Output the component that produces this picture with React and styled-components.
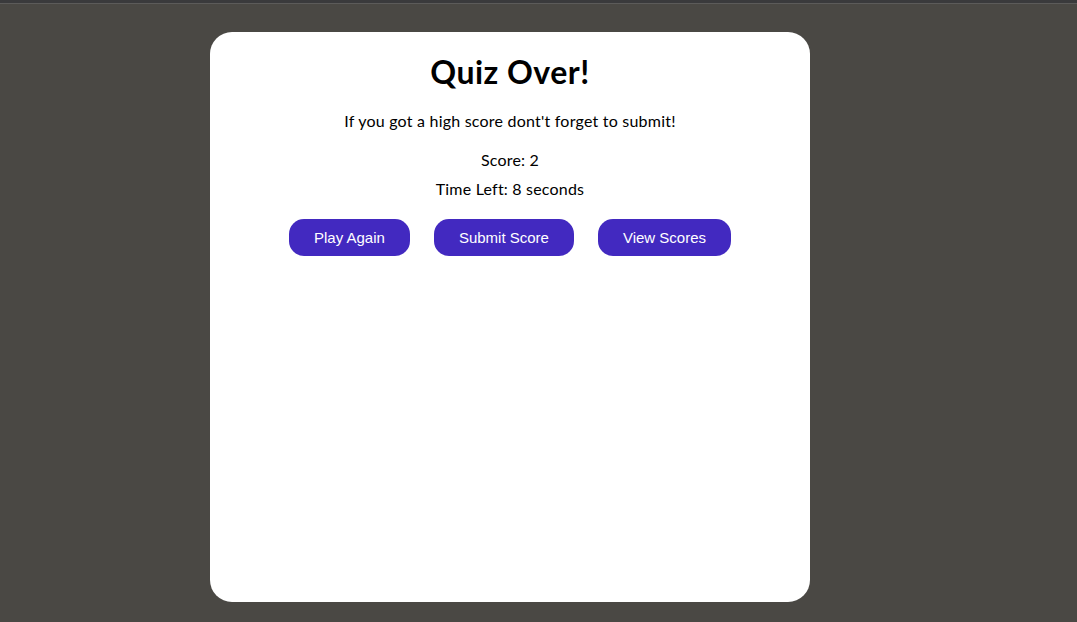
import styled, { createGlobalStyle } from "styled-components";

const GlobalStyle = createGlobalStyle`
  html, body {
    margin: 0;
    padding: 0;
    background: #4a4844;
    height: 100%;
  }
  #root {
    min-height: 100vh;
  }
`;

const Page = styled.div`
  min-height: 622px;
  display: flex;
  flex-direction: column;
  background: #4a4844;
`;

const TopBar = styled.div`
  height: 3px;
  background: #3a3a3c;
  border-bottom: 1px solid #5c5b5a;
`;

const Stage = styled.main`
  display: flex;
  justify-content: center;
  padding: 28px 0 20px 0;
`;

const Card = styled.section`
  width: 600px;
  height: 570px;
  box-sizing: border-box;
  margin-right: 57px;
  background: #ffffff;
  border-radius: 22px;
  display: flex;
  flex-direction: column;
  align-items: center;
  padding-top: 20px;
  font-family: "Lato", "Open Sans", sans-serif;
  color: #000;
`;

const Title = styled.h1`
  margin: 0;
  font-size: 32px;
  font-weight: 700;
  line-height: 40px;
  letter-spacing: 0.5px;
`;

const Note = styled.p`
  margin: 19px 0 0 0;
  font-size: 16px;
  line-height: 20px;
  letter-spacing: 0.22px;
`;

const Stat = styled.p`
  margin: ${(p) => (p.$first ? "19px" : "9px")} 0 0 0;
  font-size: 16px;
  line-height: 20px;
  letter-spacing: 0.2px;
`;

const Actions = styled.div`
  display: flex;
  gap: 24px;
  margin-top: 20px;
`;

const Button = styled.button`
  height: 37px;
  padding: 0 25px;
  border: none;
  border-radius: 15px;
  background: #4229c0;
  color: #fff;
  font-family: "Liberation Sans", Arial, sans-serif;
  font-size: 15px;
  cursor: pointer;
`;

export default function App() {
  return (
    <Page>
      <GlobalStyle />
      <TopBar />
      <Stage>
        <Card>
          <Title>Quiz Over!</Title>
          <Note>If you got a high score dont't forget to submit!</Note>
          <Stat $first>Score: 2</Stat>
          <Stat>Time Left: 8 seconds</Stat>
          <Actions>
            <Button>Play Again</Button>
            <Button>Submit Score</Button>
            <Button>View Scores</Button>
          </Actions>
        </Card>
      </Stage>
    </Page>
  );
}
